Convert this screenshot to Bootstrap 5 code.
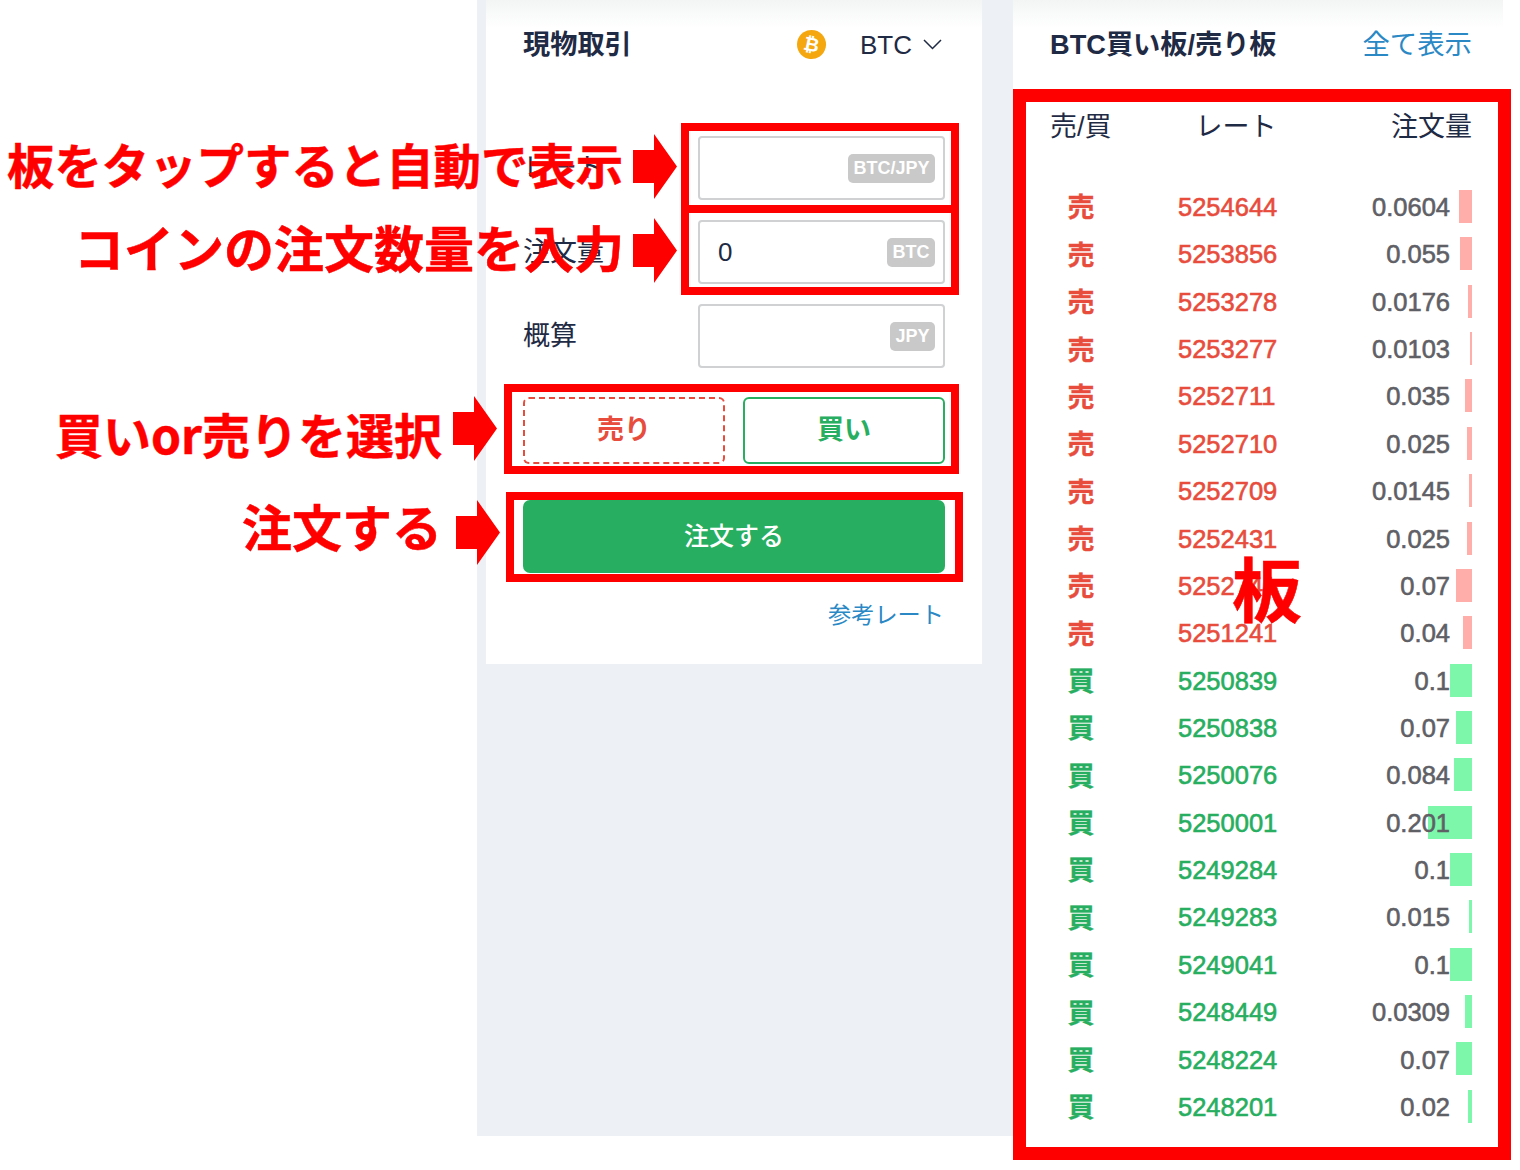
<!DOCTYPE html>
<html lang="ja">
<head>
<meta charset="utf-8">
<title>現物取引</title>
<link href="https://cdn.jsdelivr.net/npm/bootstrap@5.3.0/dist/css/bootstrap.min.css" rel="stylesheet">
<style>
html,body{margin:0;background:#fff;}
body{font-family:"Liberation Sans","Noto Sans CJK JP",sans-serif;color:#1f2a44;width:1520px;height:1170px;overflow:hidden;position:relative;}
.stage{width:1520px;height:1170px;}
.blank-side{width:477px;flex:none;}
.gray-col{width:536px;height:1136px;background:#edf1f6;padding-left:9px;flex:none;}
.order-panel{width:496px;height:664px;background:linear-gradient(#f3f5f5,#fff 28px);padding:0 37px;}
.book-panel{width:490px;height:1147px;background:linear-gradient(#f3f5f5,#fff 28px);padding:0 31px 0 37px;flex:none;}
.panel-head{height:89px;}
.order-panel .panel-head{margin-bottom:47px;}
.ttl{font-size:27.200px;font-weight:700;line-height:1;}
.coin{width:29px;height:29px;border-radius:50%;background:#f5a70f;color:#fff;font:700 19px/29px "DejaVu Sans",sans-serif;text-align:center;transform:rotate(12deg);flex:none;}
.coin-name{font-size:26px;margin-left:34px;line-height:1;}
.chev{margin-left:11px;}
.coin-pick{margin-right:3px;}
.lnk{color:#2a88c5;text-decoration:none;}
.lnk-lg{font-size:27.400px;line-height:1;}
.lnk-sm{font-size:23.200px;line-height:1;margin:31px 1px 0 0;}
.fld-row{height:64px;margin-bottom:20px;}
.fld-label{width:175px;font-size:27px;flex:none;}
.fld{width:247px;height:64px;border:2px solid #cfd1d3;border-radius:4px;padding:0 8px 0 18px;font-size:26px;}
.unit{background:#c9c9c9;color:#fff;font-size:18px;font-weight:700;line-height:29px;height:29px;padding:0 5.500px;border-radius:5px;margin-top:1px;}
.pick-row{gap:18px;margin:29px 0 36px;}
.pick{flex:1;height:67px;background:#fff;font-size:27px;font-weight:700;border-radius:6px;line-height:1;padding:0;}
.pick-sell{border:2px dashed #e74c3c;color:#e74c3c;}
.pick-buy{border:2px solid #27ae60;color:#27ae60;}
.order-btn{width:100%;height:73px;background:#27ae60;color:#fff;border:0;border-radius:7px;font-size:25px;font-weight:500;padding:0;}
.book-head{height:47px;font-size:27px;line-height:1;padding-top:25px;}
.hd-side{width:145.500px;flex:none;}
.book-body{margin-top:47px;}
.book-row{height:47.37px;position:relative;font-family:"Liberation Sans","Noto Sans CJK JP",sans-serif;font-size:25.500px;-webkit-text-stroke:.6px;}
.side-cell{width:62px;text-align:center;font-size:27px;font-weight:700;flex:none;font-family:"Noto Sans CJK JP",sans-serif;-webkit-text-stroke:.3px;}
.rate-cell{margin-left:66px;padding-top:1px;}
.qty-cell{margin-left:auto;margin-right:22px;padding-top:1px;color:#5f6066;position:relative;z-index:1;}
.is-sell{color:#e74c3c;}
.is-buy{color:#27ae60;}
.depth{position:absolute;right:0;top:7px;height:33px;}
.depth-sell{background:#ffaeaa;}
.depth-buy{background:#7df8ab;}
.ov{position:absolute;pointer-events:none;}
.frm{border:8px solid #f00;}
.f1{left:681px;top:123px;width:278px;height:90px;}
.f2{left:681px;top:205px;width:278px;height:90px;}
.f3{left:504px;top:384px;width:455px;height:90px;}
.f4{left:506px;top:492px;width:457px;height:90px;}
.f5{left:1013px;top:89px;width:498px;height:1071px;border-width:13px;}
.tag{color:#f00;font-family:"Noto Sans CJK JP",sans-serif;font-weight:700;white-space:nowrap;line-height:1;-webkit-text-stroke:.5px #f00;}
.t1{left:7px;top:140px;font-size:47.400px;}
.t2{left:74px;top:221px;font-size:50px;}
.t3{left:55px;top:409px;font-size:48px;}
.t4{left:242px;top:500px;font-size:50px;}
.t5{left:1232px;top:552px;font-size:70px;}
.a1{left:633px;top:134px;}
.a2{left:633px;top:218px;}
.a3{left:453px;top:396px;}
.a4{left:456px;top:500px;}
</style>
</head>
<body>
<div class="stage d-flex align-items-start">
  <div class="blank-side"></div>
  <div class="gray-col">
    <div class="order-panel">
      <div class="panel-head d-flex align-items-center justify-content-between">
        <div class="ttl">現物取引</div>
        <div class="coin-pick d-flex align-items-center">
          <span class="coin">₿</span>
          <span class="coin-name">BTC</span>
          <svg class="chev" width="19" height="11" viewBox="0 0 19 11"><path d="M1 1l8.500 8.500L18 1" fill="none" stroke="#1f2a44" stroke-width="1.500"/></svg>
        </div>
      </div>
      <div class="fld-row d-flex align-items-center">
        <div class="fld-label">レート</div>
        <div class="fld d-flex align-items-center justify-content-end"><span class="unit">BTC/JPY</span></div>
      </div>
      <div class="fld-row d-flex align-items-center">
        <div class="fld-label">注文量</div>
        <div class="fld d-flex align-items-center justify-content-between"><span>0</span><span class="unit">BTC</span></div>
      </div>
      <div class="fld-row d-flex align-items-center">
        <div class="fld-label">概算</div>
        <div class="fld d-flex align-items-center justify-content-end"><span class="unit">JPY</span></div>
      </div>
      <div class="pick-row d-flex">
        <button type="button" class="btn pick pick-sell">売り</button>
        <button type="button" class="btn pick pick-buy">買い</button>
      </div>
      <button type="button" class="btn order-btn">注文する</button>
      <div class="d-flex justify-content-end"><a href="#" class="lnk lnk-sm">参考レート</a></div>
    </div>
  </div>
  <div class="book-panel">
    <div class="panel-head d-flex align-items-center justify-content-between">
      <div class="ttl">BTC買い板/売り板</div>
      <a href="#" class="lnk lnk-lg">全て表示</a>
    </div>
    <div class="book-head d-flex">
      <div class="hd-side">売/買</div>
      <div>レート</div>
      <div class="ms-auto">注文量</div>
    </div>
    <div class="book-body">
      <div class="book-row d-flex align-items-center"><span class="side-cell is-sell">売</span><span class="rate-cell is-sell">5254644</span><span class="qty-cell">0.0604</span><span class="depth depth-sell" style="width:13px"></span></div>
      <div class="book-row d-flex align-items-center"><span class="side-cell is-sell">売</span><span class="rate-cell is-sell">5253856</span><span class="qty-cell">0.055</span><span class="depth depth-sell" style="width:12px"></span></div>
      <div class="book-row d-flex align-items-center"><span class="side-cell is-sell">売</span><span class="rate-cell is-sell">5253278</span><span class="qty-cell">0.0176</span><span class="depth depth-sell" style="width:4px"></span></div>
      <div class="book-row d-flex align-items-center"><span class="side-cell is-sell">売</span><span class="rate-cell is-sell">5253277</span><span class="qty-cell">0.0103</span><span class="depth depth-sell" style="width:2px"></span></div>
      <div class="book-row d-flex align-items-center"><span class="side-cell is-sell">売</span><span class="rate-cell is-sell">5252711</span><span class="qty-cell">0.035</span><span class="depth depth-sell" style="width:7px"></span></div>
      <div class="book-row d-flex align-items-center"><span class="side-cell is-sell">売</span><span class="rate-cell is-sell">5252710</span><span class="qty-cell">0.025</span><span class="depth depth-sell" style="width:5px"></span></div>
      <div class="book-row d-flex align-items-center"><span class="side-cell is-sell">売</span><span class="rate-cell is-sell">5252709</span><span class="qty-cell">0.0145</span><span class="depth depth-sell" style="width:3px"></span></div>
      <div class="book-row d-flex align-items-center"><span class="side-cell is-sell">売</span><span class="rate-cell is-sell">5252431</span><span class="qty-cell">0.025</span><span class="depth depth-sell" style="width:5px"></span></div>
      <div class="book-row d-flex align-items-center"><span class="side-cell is-sell">売</span><span class="rate-cell is-sell">5252741</span><span class="qty-cell">0.07</span><span class="depth depth-sell" style="width:16px"></span></div>
      <div class="book-row d-flex align-items-center"><span class="side-cell is-sell">売</span><span class="rate-cell is-sell">5251241</span><span class="qty-cell">0.04</span><span class="depth depth-sell" style="width:9px"></span></div>
      <div class="book-row d-flex align-items-center"><span class="side-cell is-buy">買</span><span class="rate-cell is-buy">5250839</span><span class="qty-cell">0.1</span><span class="depth depth-buy" style="width:22px"></span></div>
      <div class="book-row d-flex align-items-center"><span class="side-cell is-buy">買</span><span class="rate-cell is-buy">5250838</span><span class="qty-cell">0.07</span><span class="depth depth-buy" style="width:16px"></span></div>
      <div class="book-row d-flex align-items-center"><span class="side-cell is-buy">買</span><span class="rate-cell is-buy">5250076</span><span class="qty-cell">0.084</span><span class="depth depth-buy" style="width:18px"></span></div>
      <div class="book-row d-flex align-items-center"><span class="side-cell is-buy">買</span><span class="rate-cell is-buy">5250001</span><span class="qty-cell">0.201</span><span class="depth depth-buy" style="width:44px"></span></div>
      <div class="book-row d-flex align-items-center"><span class="side-cell is-buy">買</span><span class="rate-cell is-buy">5249284</span><span class="qty-cell">0.1</span><span class="depth depth-buy" style="width:22px"></span></div>
      <div class="book-row d-flex align-items-center"><span class="side-cell is-buy">買</span><span class="rate-cell is-buy">5249283</span><span class="qty-cell">0.015</span><span class="depth depth-buy" style="width:3px"></span></div>
      <div class="book-row d-flex align-items-center"><span class="side-cell is-buy">買</span><span class="rate-cell is-buy">5249041</span><span class="qty-cell">0.1</span><span class="depth depth-buy" style="width:22px"></span></div>
      <div class="book-row d-flex align-items-center"><span class="side-cell is-buy">買</span><span class="rate-cell is-buy">5248449</span><span class="qty-cell">0.0309</span><span class="depth depth-buy" style="width:7px"></span></div>
      <div class="book-row d-flex align-items-center"><span class="side-cell is-buy">買</span><span class="rate-cell is-buy">5248224</span><span class="qty-cell">0.07</span><span class="depth depth-buy" style="width:16px"></span></div>
      <div class="book-row d-flex align-items-center"><span class="side-cell is-buy">買</span><span class="rate-cell is-buy">5248201</span><span class="qty-cell">0.02</span><span class="depth depth-buy" style="width:4px"></span></div>
    </div>
  </div>
</div>

<div class="ov frm f1"></div>
<div class="ov frm f2"></div>
<div class="ov frm f3"></div>
<div class="ov frm f4"></div>
<div class="ov frm f5"></div>

<div class="ov tag t1">板をタップすると自動で表示</div>
<div class="ov tag t2">コインの注文数量を入力</div>
<div class="ov tag t3">買いor売りを選択</div>
<div class="ov tag t4">注文する</div>
<div class="ov tag t5">板</div>

<svg class="ov a1" width="44" height="65" viewBox="0 0 44 65"><path d="M0 16H21V0L44 32.500 21 65V49H0Z" fill="#f00"/></svg>
<svg class="ov a2" width="44" height="65" viewBox="0 0 44 65"><path d="M0 16H21V0L44 32.500 21 65V49H0Z" fill="#f00"/></svg>
<svg class="ov a3" width="44" height="65" viewBox="0 0 44 65"><path d="M0 16H21V0L44 32.500 21 65V49H0Z" fill="#f00"/></svg>
<svg class="ov a4" width="44" height="65" viewBox="0 0 44 65"><path d="M0 16H21V0L44 32.500 21 65V49H0Z" fill="#f00"/></svg>

<script src="https://cdn.jsdelivr.net/npm/bootstrap@5.3.0/dist/js/bootstrap.bundle.min.js"></script>
</body>
</html>
